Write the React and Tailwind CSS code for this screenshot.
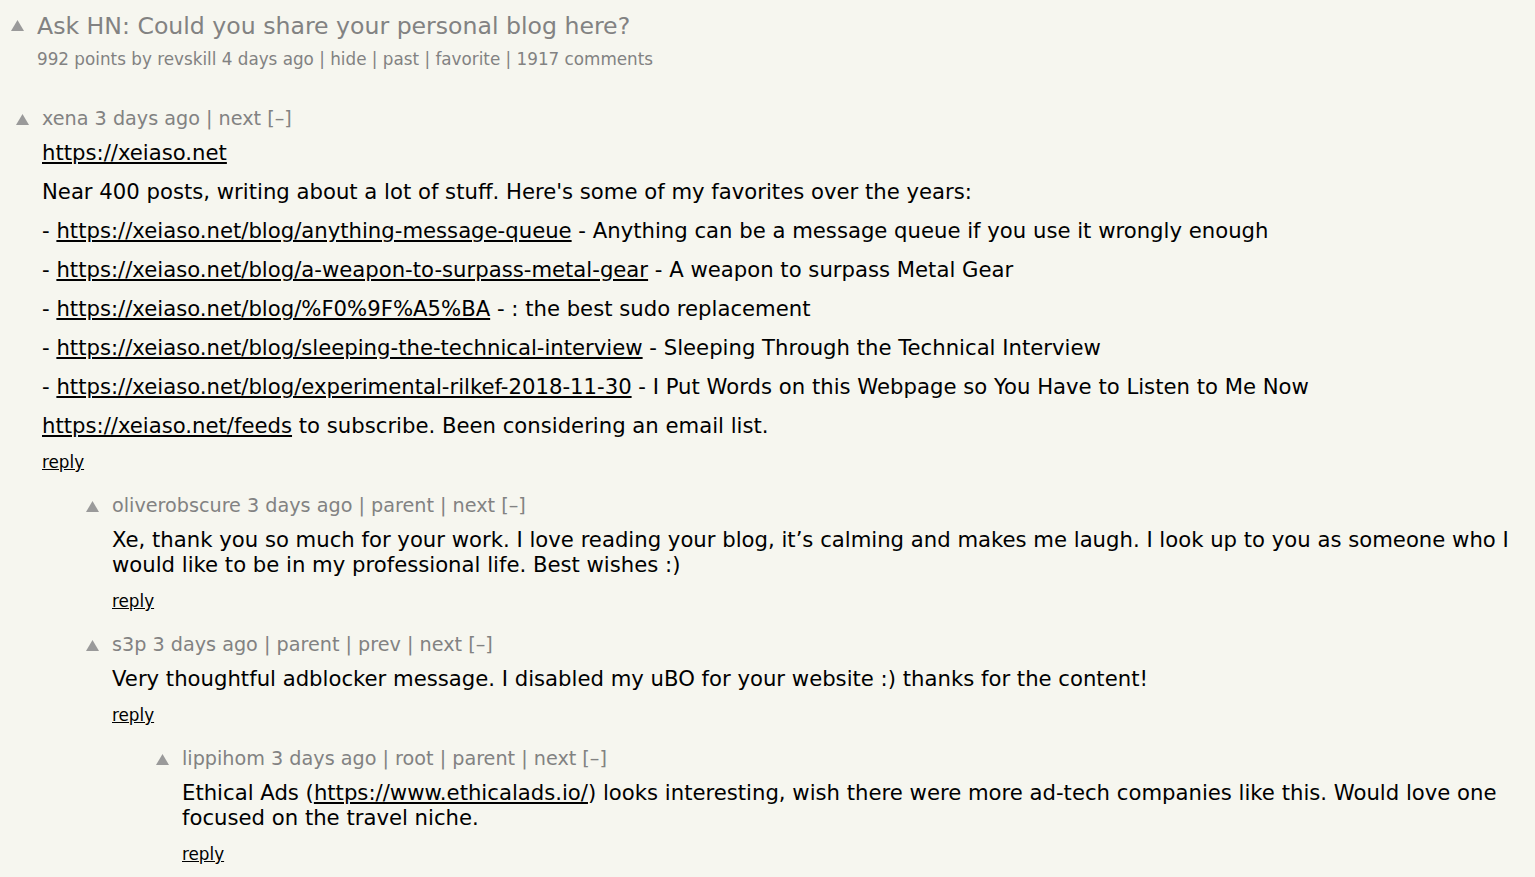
import React from "react";

const font = { fontFamily: '"DejaVu Sans", Verdana, sans-serif' };

function Arrow() {
  return (
    <svg width="13" height="11" viewBox="0 0 13 11">
      <polygon points="6.5,0 13,11 0,11" fill="#9a9a9a" />
    </svg>
  );
}

function L({ children }) {
  return <a className="underline text-black">{children}</a>;
}

function Comment({ indent, meta, children }) {
  return (
    <div className="flex" style={{ paddingLeft: indent }}>
      <div className="w-[42px] shrink-0 flex justify-center pl-[3px] pt-[7px]">
        <Arrow />
      </div>
      <div className="flex-1 pr-[8px]">
        <div className="text-[19.2px] leading-[24px] text-[#828282]">{meta}</div>
        <div className="text-[21.2px] leading-[25px] text-black mt-[9.5px] [&>p+p]:mt-[14px]">
          {children}
        </div>
        <div className="text-[16.8px] leading-[24px] mt-[12px] mb-[19.5px]">
          <a className="underline text-black">reply</a>
        </div>
      </div>
    </div>
  );
}

export default function App() {
  return (
    <div className="min-h-screen bg-[#f6f6ef] overflow-hidden" style={font}>
      <div className="pt-[10px]">
        <div className="flex">
          <div className="w-[35px] shrink-0 flex justify-center pt-[10px]">
            <Arrow />
          </div>
          <div className="pl-[2px]">
            <div className="text-[23.6px] leading-[32px] text-[#828282]">
              Ask HN: Could you share your personal blog here?
            </div>
            <div className="text-[16.8px] leading-[24px] text-[#828282] mt-[5px]">
              992 points by revskill 4 days ago | hide | past | favorite | 1917 comments
            </div>
          </div>
        </div>

        <div className="mt-[35.5px]">
          <Comment indent={0} meta="xena 3 days ago | next [–]">
            <p><L>https://xeiaso.net</L></p>
            <p>Near 400 posts, writing about a lot of stuff. Here's some of my favorites over the years:</p>
            <p>- <L>https://xeiaso.net/blog/anything-message-queue</L> - Anything can be a message queue if you use it wrongly enough</p>
            <p>- <L>https://xeiaso.net/blog/a-weapon-to-surpass-metal-gear</L> - A weapon to surpass Metal Gear</p>
            <p>- <L>https://xeiaso.net/blog/%F0%9F%A5%BA</L> - : the best sudo replacement</p>
            <p>- <L>https://xeiaso.net/blog/sleeping-the-technical-interview</L> - Sleeping Through the Technical Interview</p>
            <p>- <L>https://xeiaso.net/blog/experimental-rilkef-2018-11-30</L> - I Put Words on this Webpage so You Have to Listen to Me Now</p>
            <p><L>https://xeiaso.net/feeds</L> to subscribe. Been considering an email list.</p>
          </Comment>
          <Comment indent={70} meta="oliverobscure 3 days ago | parent | next [–]">
            <p>Xe, thank you so much for your work. I love reading your blog, it’s calming and makes me laugh. I look up to you as someone who I would like to be in my professional life. Best wishes :)</p>
          </Comment>
          <Comment indent={70} meta="s3p 3 days ago | parent | prev | next [–]">
            <p>Very thoughtful adblocker message. I disabled my uBO for your website :) thanks for the content!</p>
          </Comment>
          <Comment indent={140} meta="lippihom 3 days ago | root | parent | next [–]">
            <p>Ethical Ads (<L>https://www.ethicalads.io/</L>) looks interesting, wish there were more ad-tech companies like this. Would love one focused on the travel niche.</p>
          </Comment>
        </div>
      </div>
    </div>
  );
}
